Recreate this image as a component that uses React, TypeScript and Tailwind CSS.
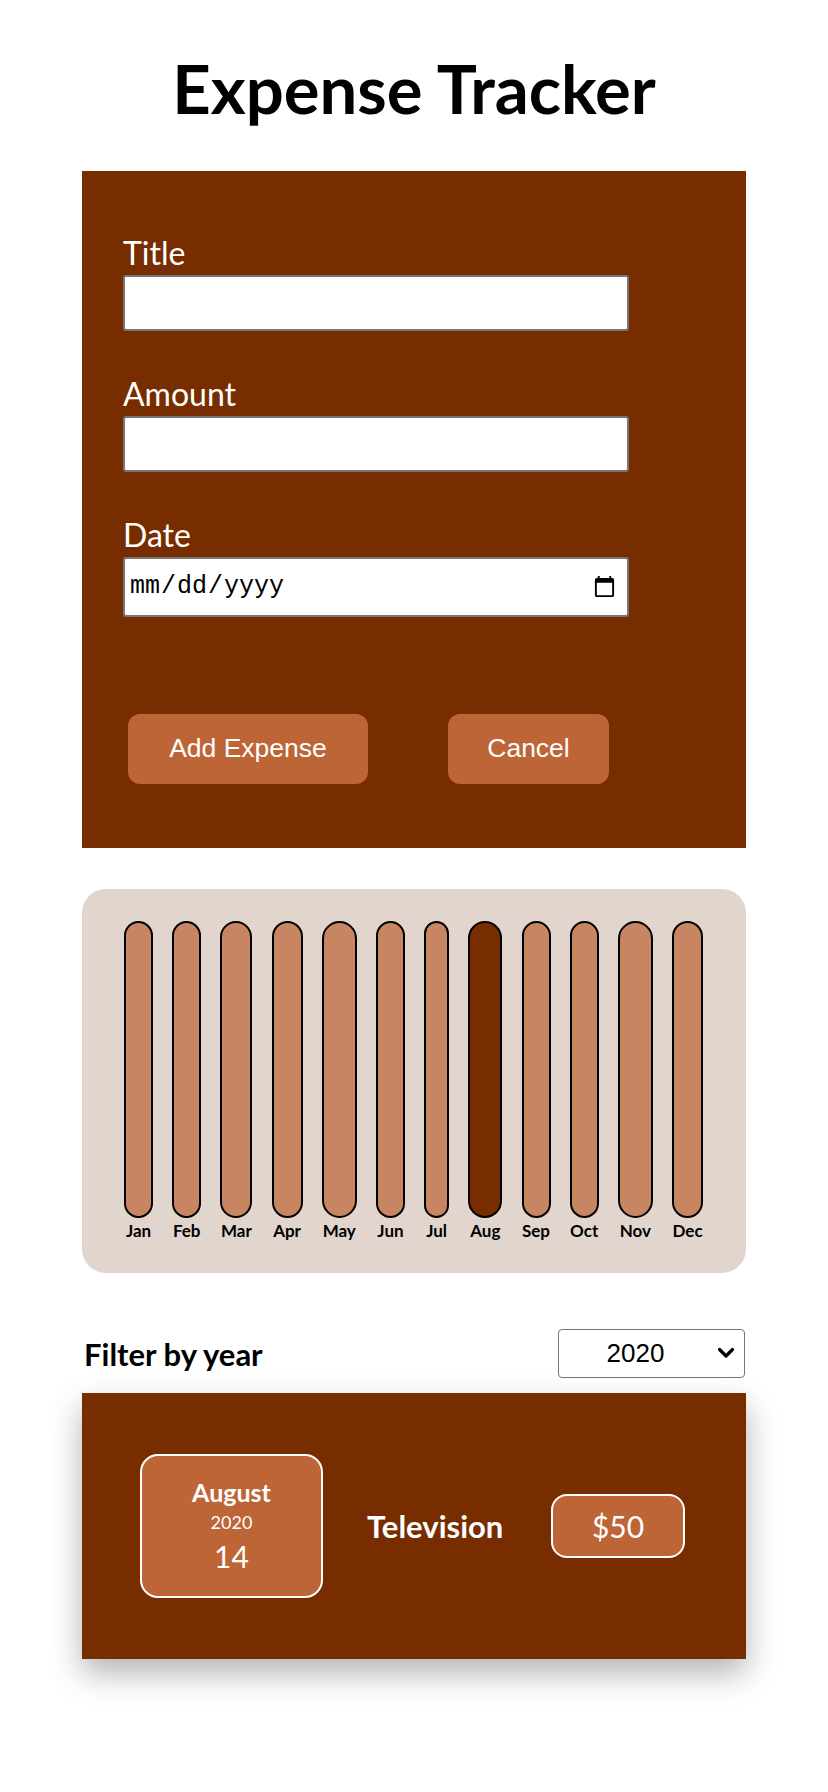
import React from "react";

const MONTHS = [
  { label: "Jan", w: 29 },
  { label: "Feb", w: 29 },
  { label: "Mar", w: 32 },
  { label: "Apr", w: 31 },
  { label: "May", w: 35 },
  { label: "Jun", w: 29 },
  { label: "Jul", w: 25 },
  { label: "Aug", w: 34, active: true },
  { label: "Sep", w: 29 },
  { label: "Oct", w: 29 },
  { label: "Nov", w: 35 },
  { label: "Dec", w: 31 },
];

function ExpenseForm() {
  return (
    <form className="mx-auto mt-[43px] w-[664px] bg-[#782d00] pl-[41px] pt-[64px] pb-[64px]">
      <label className="block text-[32px] leading-[36px] text-white">Title</label>
      <input
        type="text"
        className="mt-1 block h-[56px] w-[506px] rounded-[3px] border-2 border-[#767676] bg-white px-2 text-[24px]"
      />

      <label className="mt-[45px] block text-[32px] leading-[36px] text-white">Amount</label>
      <input
        type="number"
        className="mt-1 block h-[56px] w-[506px] rounded-[3px] border-2 border-[#767676] bg-white px-2 text-[24px]"
      />

      <label className="mt-[45px] block text-[32px] leading-[36px] text-white">Date</label>
      <input
        type="date"
        className="mt-1 block h-[60px] w-[506px] rounded-[3px] border-2 border-[#767676] bg-white pl-[4px] pr-2 font-['Liberation_Mono',monospace] text-[25px] text-black"
      />

      <div className="mt-[97px] flex items-center gap-[80px] pl-[5px]">
        <button
          type="button"
          className="h-[70px] w-[240px] rounded-[12px] bg-[#bd6536] font-['Liberation_Sans',Arial,sans-serif] text-[26.5px] text-white"
        >
          Add Expense
        </button>
        <button
          type="button"
          className="h-[70px] w-[161px] rounded-[12px] bg-[#bd6536] font-['Liberation_Sans',Arial,sans-serif] text-[26.5px] text-white"
        >
          Cancel
        </button>
      </div>
    </form>
  );
}

function Chart() {
  return (
    <div className="mx-auto mt-[41px] h-[384px] w-[664px] rounded-[24px] bg-[#e2d5cd] pl-[42px] pt-[32px]">
      <div className="flex gap-[19.2px]">
        {MONTHS.map((m) => (
          <div key={m.label} className="flex flex-col items-center" style={{ width: m.w }}>
            <div
              className={
                "h-[297px] w-full rounded-full border-2 border-black " +
                (m.active ? "bg-[#782d00]" : "bg-[#c78561]")
              }
            />
            <span className="mt-[3px] text-[17px] leading-[20px] font-bold text-black whitespace-nowrap">
              {m.label}
            </span>
          </div>
        ))}
      </div>
    </div>
  );
}

function YearFilter() {
  return (
    <div className="mx-auto mt-[56px] flex w-[664px] items-center justify-between pl-[2px]">
      <span className="text-[31px] leading-[40px] font-bold text-black">Filter by year</span>
      <div className="relative mr-[1px]">
        <select
          defaultValue="2020"
          className="h-[49px] w-[187px] appearance-none rounded-[4px] border border-[#767676] bg-white pr-[32px] text-center font-['Liberation_Sans',Arial,sans-serif] text-[26px] text-black [text-align-last:center]"
        >
          <option value="2022">2022</option>
          <option value="2021">2021</option>
          <option value="2020">2020</option>
          <option value="2019">2019</option>
        </select>
        <svg
          className="pointer-events-none absolute right-[10px] top-[18px]"
          width="18"
          height="12"
          viewBox="0 0 18 12"
          fill="none"
        >
          <path d="M2.5 2.5 L9 9 L15.5 2.5" stroke="black" strokeWidth="3.2" strokeLinecap="round" strokeLinejoin="round" />
        </svg>
      </div>
    </div>
  );
}

function ExpenseItem() {
  return (
    <div className="mx-auto mt-[15px] flex h-[266px] w-[664px] items-center bg-[#782d00] pl-[58px] shadow-[0_14px_30px_rgba(0,0,0,0.3)]">
      <div className="flex h-[144px] w-[183px] flex-col items-center justify-center rounded-[18px] border-2 border-white bg-[#bd6536] text-white">
        <span className="mb-[5px] text-[25px] leading-[28px] font-bold">August</span>
        <span className="mb-[5px] text-[18px] leading-[22px]">2020</span>
        <span className="text-[30px] leading-[36px]">14</span>
      </div>
      <div className="ml-[44px] w-[184px]">
        <h2 className="text-[31px] leading-[40px] font-bold text-white">Television</h2>
      </div>
      <div className="flex h-[64px] w-[134px] items-center justify-center rounded-[16px] border-2 border-white bg-[#bd6536] text-[30px] text-white">
        $50
      </div>
    </div>
  );
}

export default function App() {
  return (
    <div className="min-h-[1792px] bg-white pt-[48px] font-['Lato','Open_Sans',sans-serif]">
      <h1 className="text-center text-[67px] leading-[80px] font-bold text-black">Expense Tracker</h1>
      <ExpenseForm />
      <Chart />
      <YearFilter />
      <ExpenseItem />
    </div>
  );
}
